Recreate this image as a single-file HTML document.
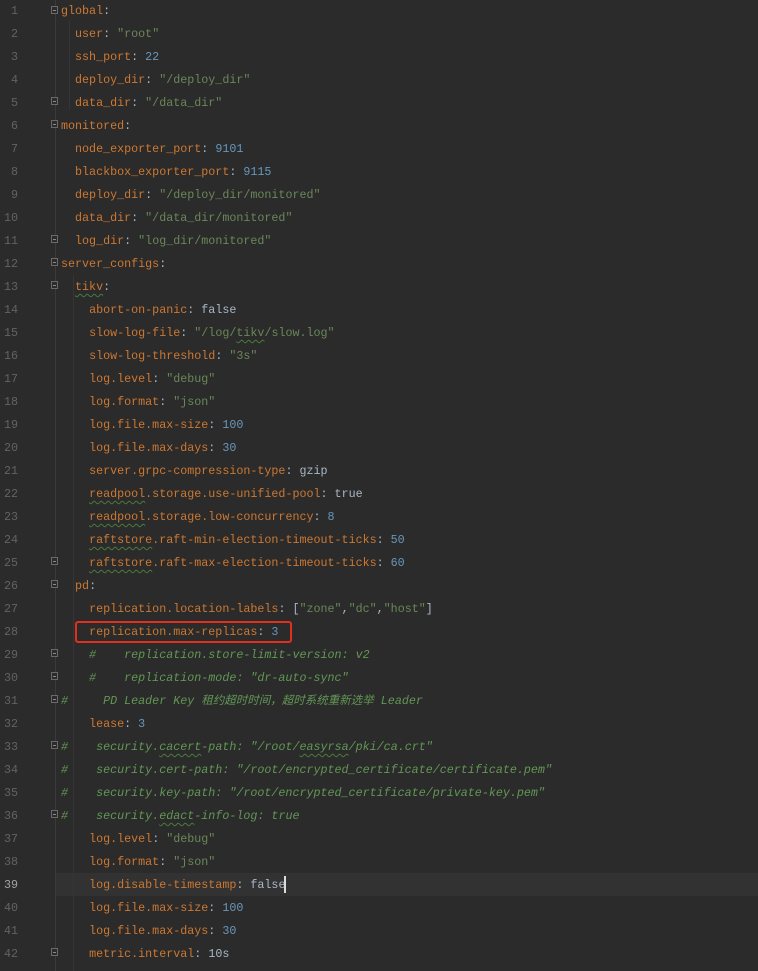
<!DOCTYPE html>
<html><head><meta charset="utf-8"><style>
html,body{margin:0;padding:0;background:#2b2b2b;width:758px;height:971px;overflow:hidden;position:relative}
.ln{position:absolute;left:0;margin-top:1px;width:18px;text-align:right;color:#606366;font:11.7px "Liberation Mono",monospace;height:23px;line-height:23px}
.l{position:absolute;left:61px;margin-top:5px;height:23px;line-height:23px;font:11.7px "Liberation Mono",monospace;white-space:pre;color:#a9b7c6}
.k{color:#cc7832}.s{color:#6a8759}.n{color:#6897bb}.c{color:#629755;font-style:italic}.w{color:#a9b7c6}
.u{text-decoration:underline wavy #4a7a3a;text-underline-offset:3px;text-decoration-thickness:1px}
.zh{font-family:"Noto Sans CJK SC",sans-serif;font-size:11.5px;line-height:10px;vertical-align:baseline}
.gl{position:absolute;left:55px;top:0;width:1px;height:971px;background:#3a3a3a}
.f{position:absolute;left:51px;width:7px;height:8px;border:1px solid #6a6a6a;box-sizing:border-box;background:#2b2b2b}
.f:after{content:"";position:absolute;left:1px;top:3px;width:3px;height:1px;background:#8a8a8a}
.cur{position:absolute;left:56px;right:0;height:23px;background:#323232}
.box{position:absolute;left:75px;top:621px;width:217px;height:22px;border:2px solid #e0301e;border-radius:3px;box-sizing:border-box}
.caret{position:absolute;left:284px;top:876px;width:2px;height:17px;background:#dcdcdc}
.ig{position:absolute;width:1px;background:#353535}
</style></head><body>
<div class="cur" style="top:873px"></div>
<div class="gl"></div>
<div class="ig" style="left:73px;top:275px;height:696px"></div>
<div class="ig" style="left:69px;top:20px;height:90px"></div>

<div class="ln" style="top:-1px">1</div><div class="ln" style="top:22px">2</div><div class="ln" style="top:45px">3</div><div class="ln" style="top:68px">4</div><div class="ln" style="top:91px">5</div><div class="ln" style="top:114px">6</div><div class="ln" style="top:137px">7</div><div class="ln" style="top:160px">8</div><div class="ln" style="top:183px">9</div><div class="ln" style="top:206px">10</div><div class="ln" style="top:229px">11</div><div class="ln" style="top:252px">12</div><div class="ln" style="top:275px">13</div><div class="ln" style="top:298px">14</div><div class="ln" style="top:321px">15</div><div class="ln" style="top:344px">16</div><div class="ln" style="top:367px">17</div><div class="ln" style="top:390px">18</div><div class="ln" style="top:413px">19</div><div class="ln" style="top:436px">20</div><div class="ln" style="top:459px">21</div><div class="ln" style="top:482px">22</div><div class="ln" style="top:505px">23</div><div class="ln" style="top:528px">24</div><div class="ln" style="top:551px">25</div><div class="ln" style="top:574px">26</div><div class="ln" style="top:597px">27</div><div class="ln" style="top:620px">28</div><div class="ln" style="top:643px">29</div><div class="ln" style="top:666px">30</div><div class="ln" style="top:689px">31</div><div class="ln" style="top:712px">32</div><div class="ln" style="top:735px">33</div><div class="ln" style="top:758px">34</div><div class="ln" style="top:781px">35</div><div class="ln" style="top:804px">36</div><div class="ln" style="top:827px">37</div><div class="ln" style="top:850px">38</div><div class="ln" style="top:873px;color:#a4a3a3">39</div><div class="ln" style="top:896px">40</div><div class="ln" style="top:919px">41</div><div class="ln" style="top:942px">42</div>

<div class="f" style="top:6px"></div><div class="f" style="top:97px"></div><div class="f" style="top:120px"></div><div class="f" style="top:235px"></div><div class="f" style="top:258px"></div><div class="f" style="top:281px"></div><div class="f" style="top:557px"></div><div class="f" style="top:580px"></div><div class="f" style="top:649px"></div><div class="f" style="top:672px"></div><div class="f" style="top:695px"></div><div class="f" style="top:741px"></div><div class="f" style="top:810px"></div><div class="f" style="top:948px"></div>

<div class="l" style="top:-1px"><span class="k">global</span>:</div>
<div class="l" style="top:22px">  <span class="k">user</span>: <span class="s">"root"</span></div>
<div class="l" style="top:45px">  <span class="k">ssh_port</span>: <span class="n">22</span></div>
<div class="l" style="top:68px">  <span class="k">deploy_dir</span>: <span class="s">"/deploy_dir"</span></div>
<div class="l" style="top:91px">  <span class="k">data_dir</span>: <span class="s">"/data_dir"</span></div>
<div class="l" style="top:114px"><span class="k">monitored</span>:</div>
<div class="l" style="top:137px">  <span class="k">node_exporter_port</span>: <span class="n">9101</span></div>
<div class="l" style="top:160px">  <span class="k">blackbox_exporter_port</span>: <span class="n">9115</span></div>
<div class="l" style="top:183px">  <span class="k">deploy_dir</span>: <span class="s">"/deploy_dir/monitored"</span></div>
<div class="l" style="top:206px">  <span class="k">data_dir</span>: <span class="s">"/data_dir/monitored"</span></div>
<div class="l" style="top:229px">  <span class="k">log_dir</span>: <span class="s">"log_dir/monitored"</span></div>
<div class="l" style="top:252px"><span class="k">server_configs</span>:</div>
<div class="l" style="top:275px">  <span class="k u">tikv</span>:</div>
<div class="l" style="top:298px">    <span class="k">abort-on-panic</span>: <span class="w">false</span></div>
<div class="l" style="top:321px">    <span class="k">slow-log-file</span>: <span class="s">"/log/<span class="u">tikv</span>/slow.log"</span></div>
<div class="l" style="top:344px">    <span class="k">slow-log-threshold</span>: <span class="s">"3s"</span></div>
<div class="l" style="top:367px">    <span class="k">log.level</span>: <span class="s">"debug"</span></div>
<div class="l" style="top:390px">    <span class="k">log.format</span>: <span class="s">"json"</span></div>
<div class="l" style="top:413px">    <span class="k">log.file.max-size</span>: <span class="n">100</span></div>
<div class="l" style="top:436px">    <span class="k">log.file.max-days</span>: <span class="n">30</span></div>
<div class="l" style="top:459px">    <span class="k">server.grpc-compression-type</span>: <span class="w">gzip</span></div>
<div class="l" style="top:482px">    <span class="k"><span class="u">readpool</span>.storage.use-unified-pool</span>: <span class="w">true</span></div>
<div class="l" style="top:505px">    <span class="k"><span class="u">readpool</span>.storage.low-concurrency</span>: <span class="n">8</span></div>
<div class="l" style="top:528px">    <span class="k"><span class="u">raftstore</span>.raft-min-election-timeout-ticks</span>: <span class="n">50</span></div>
<div class="l" style="top:551px">    <span class="k"><span class="u">raftstore</span>.raft-max-election-timeout-ticks</span>: <span class="n">60</span></div>
<div class="l" style="top:574px">  <span class="k">pd</span>:</div>
<div class="l" style="top:597px">    <span class="k">replication.location-labels</span>: [<span class="s">"zone"</span>,<span class="s">"dc"</span>,<span class="s">"host"</span>]</div>
<div class="l" style="top:620px">    <span class="k">replication.max-replicas</span>: <span class="n">3</span></div>
<div class="l c" style="top:643px">    #    replication.store-limit-version: v2</div>
<div class="l c" style="top:666px">    #    replication-mode: "dr-auto-sync"</div>
<div class="l c" style="top:689px">#     PD Leader Key <span class="zh">租约超时时间，超时系统重新选举</span> Leader</div>
<div class="l" style="top:712px">    <span class="k">lease</span>: <span class="n">3</span></div>
<div class="l c" style="top:735px">#    security.<span class="u">cacert</span>-path: "/root/<span class="u">easyrsa</span>/pki/ca.crt"</div>
<div class="l c" style="top:758px">#    security.cert-path: "/root/encrypted_certificate/certificate.pem"</div>
<div class="l c" style="top:781px">#    security.key-path: "/root/encrypted_certificate/private-key.pem"</div>
<div class="l c" style="top:804px">#    security.<span class="u">edact</span>-info-log: true</div>
<div class="l" style="top:827px">    <span class="k">log.level</span>: <span class="s">"debug"</span></div>
<div class="l" style="top:850px">    <span class="k">log.format</span>: <span class="s">"json"</span></div>
<div class="l" style="top:873px">    <span class="k">log.disable-timestamp</span>: <span class="w">false</span></div>
<div class="l" style="top:896px">    <span class="k">log.file.max-size</span>: <span class="n">100</span></div>
<div class="l" style="top:919px">    <span class="k">log.file.max-days</span>: <span class="n">30</span></div>
<div class="l" style="top:942px">    <span class="k">metric.interval</span>: <span class="w">10s</span></div>
<div class="box"></div>
<div class="caret"></div>
</body></html>
